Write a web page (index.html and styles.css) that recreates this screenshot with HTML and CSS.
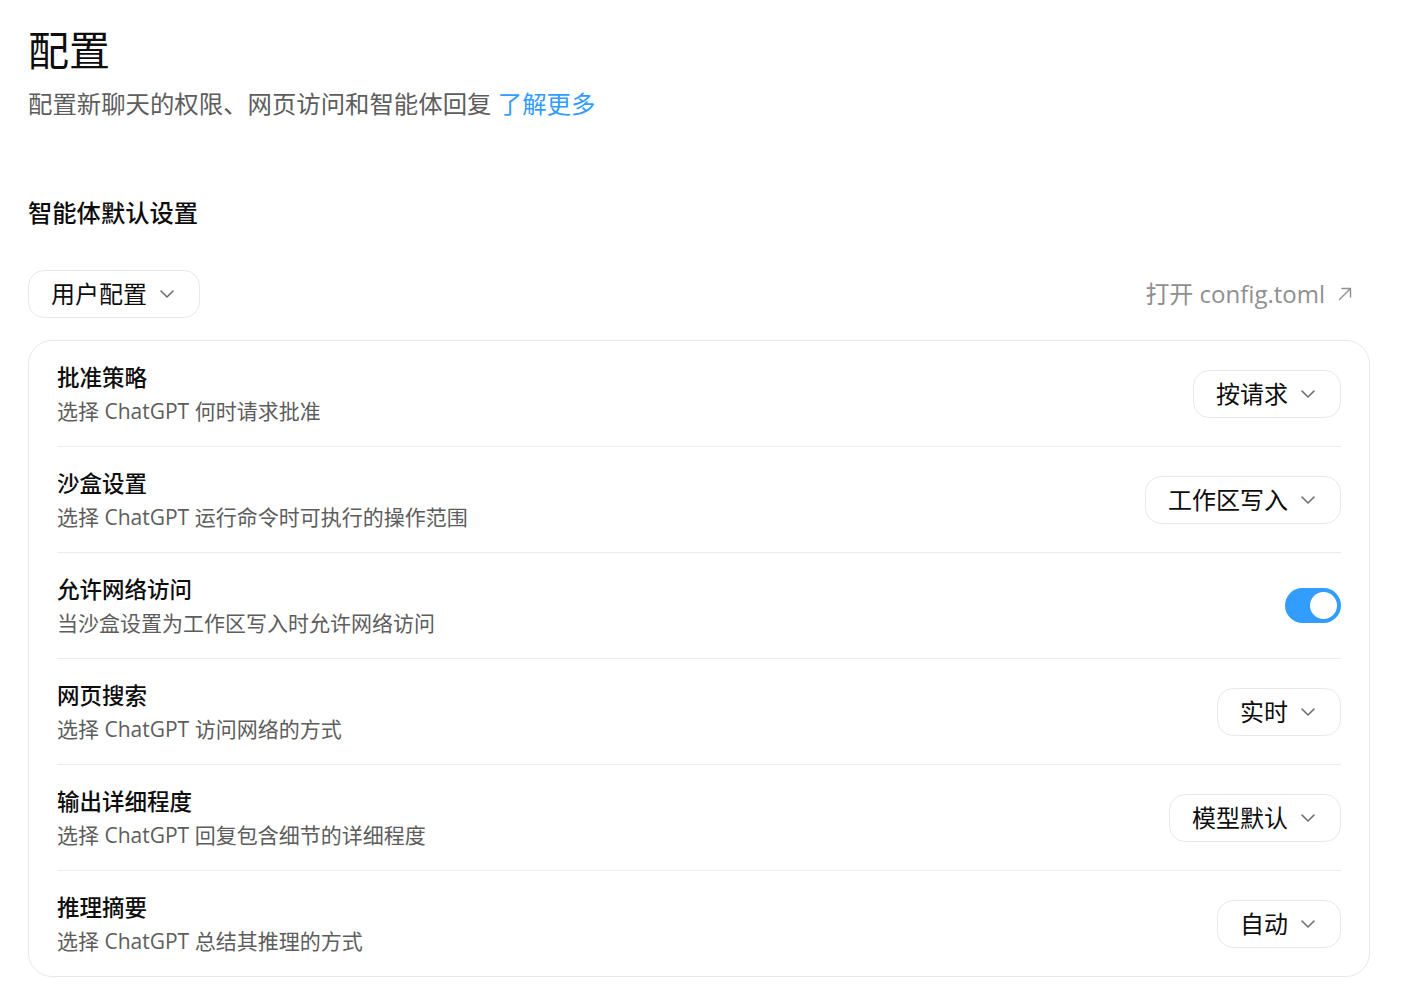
FILE: index.html
```html
<!DOCTYPE html>
<html lang="zh-CN">
<head>
<meta charset="utf-8">
<title>配置</title>
<link rel="stylesheet" href="styles.css">
</head>
<body>
<main class="page">
  <h1 class="page-title">配置</h1>
  <p class="page-sub">配置新聊天的权限、网页访问和智能体回复 <a class="link" href="#">了解更多</a></p>

  <h2 class="section-title">智能体默认设置</h2>

  <div class="toolbar">
    <button class="select">用户配置<svg class="chev" viewBox="0 0 16 10" width="16" height="10"><path d="M2 2l6 6 6-6" fill="none" stroke="currentColor" stroke-width="1.6" stroke-linecap="round" stroke-linejoin="round"/></svg></button>
    <a class="open-file" href="#">打开 config.toml<svg class="ext" viewBox="0 0 16 16" width="16" height="16"><path d="M2.5 13.5L13.5 2.5M5 2.5h8.5V11" fill="none" stroke="currentColor" stroke-width="1.4" stroke-linecap="round" stroke-linejoin="round"/></svg></a>
  </div>

  <section class="card">
    <div class="row">
      <div class="row-text">
        <div class="row-title">批准策略</div>
        <div class="row-desc">选择 ChatGPT 何时请求批准</div>
      </div>
      <button class="select">按请求<svg class="chev" viewBox="0 0 16 10" width="16" height="10"><path d="M2 2l6 6 6-6" fill="none" stroke="currentColor" stroke-width="1.6" stroke-linecap="round" stroke-linejoin="round"/></svg></button>
    </div>
    <div class="row">
      <div class="row-text">
        <div class="row-title">沙盒设置</div>
        <div class="row-desc">选择 ChatGPT 运行命令时可执行的操作范围</div>
      </div>
      <button class="select">工作区写入<svg class="chev" viewBox="0 0 16 10" width="16" height="10"><path d="M2 2l6 6 6-6" fill="none" stroke="currentColor" stroke-width="1.6" stroke-linecap="round" stroke-linejoin="round"/></svg></button>
    </div>
    <div class="row">
      <div class="row-text">
        <div class="row-title">允许网络访问</div>
        <div class="row-desc">当沙盒设置为工作区写入时允许网络访问</div>
      </div>
      <span class="toggle on"><span class="knob"></span></span>
    </div>
    <div class="row">
      <div class="row-text">
        <div class="row-title">网页搜索</div>
        <div class="row-desc">选择 ChatGPT 访问网络的方式</div>
      </div>
      <button class="select">实时<svg class="chev" viewBox="0 0 16 10" width="16" height="10"><path d="M2 2l6 6 6-6" fill="none" stroke="currentColor" stroke-width="1.6" stroke-linecap="round" stroke-linejoin="round"/></svg></button>
    </div>
    <div class="row">
      <div class="row-text">
        <div class="row-title">输出详细程度</div>
        <div class="row-desc">选择 ChatGPT 回复包含细节的详细程度</div>
      </div>
      <button class="select">模型默认<svg class="chev" viewBox="0 0 16 10" width="16" height="10"><path d="M2 2l6 6 6-6" fill="none" stroke="currentColor" stroke-width="1.6" stroke-linecap="round" stroke-linejoin="round"/></svg></button>
    </div>
    <div class="row">
      <div class="row-text">
        <div class="row-title">推理摘要</div>
        <div class="row-desc">选择 ChatGPT 总结其推理的方式</div>
      </div>
      <button class="select">自动<svg class="chev" viewBox="0 0 16 10" width="16" height="10"><path d="M2 2l6 6 6-6" fill="none" stroke="currentColor" stroke-width="1.6" stroke-linecap="round" stroke-linejoin="round"/></svg></button>
    </div>
  </section>
</main>
</body>
</html>
```

FILE: styles.css
```css
* { box-sizing: border-box; }

html, body {
  margin: 0;
  background: #ffffff;
}

body {
  font-family: "Open Sans", "Noto Sans CJK SC", sans-serif;
  color: #0d0d0d;
}

.page {
  width: 1370px;
  padding: 26px 0 0 28px;
}

.page-title {
  margin: 0;
  font-size: 41px;
  line-height: 48px;
  font-weight: 400;
  color: #0d0d0d;
}

.page-sub {
  margin: 12px 0 0;
  font-size: 24.4px;
  line-height: 36px;
  color: #5d5d5d;
}

.link {
  color: #339cff;
  text-decoration: none;
}

.section-title {
  margin: 73px 0 0;
  font-size: 24.3px;
  line-height: 36px;
  font-weight: 500;
  color: #0d0d0d;
}

.toolbar {
  margin-top: 39px;
  display: flex;
  align-items: center;
  justify-content: space-between;
  padding-right: 17px;
}

.select {
  display: inline-flex;
  align-items: center;
  gap: 12px;
  height: 48px;
  padding: 0 24px 0 22px;
  border: 1px solid #e8e8e8;
  border-radius: 16px;
  background: #ffffff;
  font-family: inherit;
  font-size: 24px;
  line-height: 36px;
  color: #0d0d0d;
  cursor: pointer;
}

.chev {
  color: #6e6e6e;
  flex: none;
}

.open-file {
  display: inline-flex;
  align-items: center;
  gap: 12px;
  font-size: 24px;
  line-height: 36px;
  color: #8f8f8f;
  text-decoration: none;
}

.ext {
  color: #8f8f8f;
}

.card {
  margin-top: 22px;
  border: 1px solid #e8e8e8;
  border-radius: 24px;
  padding: 0 28px;
}

.row {
  display: flex;
  align-items: center;
  justify-content: space-between;
  padding: 20px 0;
  border-bottom: 1px solid #ebebeb;
}

.row:last-child {
  border-bottom: none;
}

.row-title {
  font-size: 22.5px;
  line-height: 33px;
  font-weight: 500;
  color: #0d0d0d;
}

.row-desc {
  margin-top: 2px;
  font-size: 21px;
  line-height: 30px;
  color: #5d5d5d;
}

.toggle {
  position: relative;
  display: inline-block;
  width: 56px;
  height: 35px;
  border-radius: 18px;
  background: #d9d9d9;
}

.toggle.on {
  background: #339cff;
}

.knob {
  position: absolute;
  top: 4px;
  right: 4px;
  width: 27px;
  height: 27px;
  border-radius: 50%;
  background: #ffffff;
}
```
